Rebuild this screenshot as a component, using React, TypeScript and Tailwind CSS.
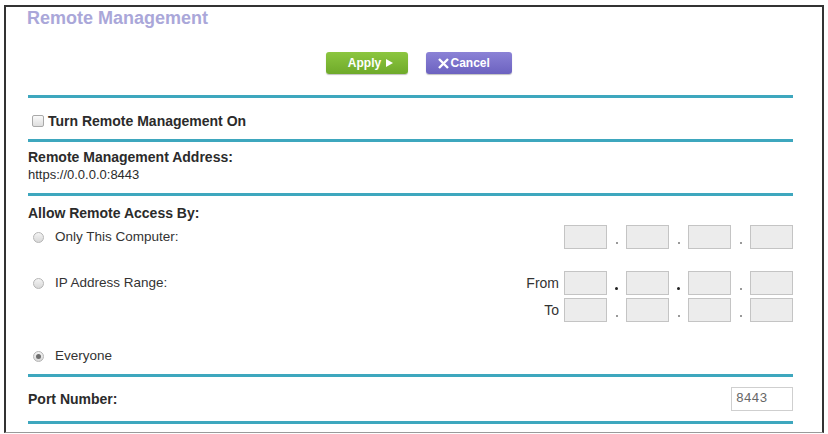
const font = { fontFamily: '"Liberation Sans", Arial, sans-serif' };

const Rule = ({ className = '' }: { className?: string }) => (
  <div className={`h-[3px] w-full bg-[#3ea7be] ${className}`} />
);

const Radio = ({ checked = false }: { checked?: boolean }) => (
  <span className="flex h-[11px] w-[11px] shrink-0 items-center justify-center rounded-full border border-[#b5b5b5] bg-gradient-to-b from-[#f4f4f4] to-[#d8d8d8]">
    {checked && <span className="h-[5px] w-[5px] rounded-full bg-[#6d6d6d]" />}
  </span>
);

const Box = () => (
  <div className="h-[24px] w-[43px] border border-[#c4c4c4] bg-[#ececec]" />
);

const Dot = ({ bold = false }: { bold?: boolean }) => (
  <span className="flex w-[19px] items-end justify-center pb-[5px]">
    <span
      className={
        bold
          ? 'h-[3px] w-[3px] rounded-full bg-[#222]'
          : 'h-[2px] w-[2px] rounded-full bg-[#777]'
      }
    />
  </span>
);

const IpRow = ({ bold = false }: { bold?: boolean }) => (
  <div className="flex">
    <Box />
    <Dot bold={bold} />
    <Box />
    <Dot bold={bold} />
    <Box />
    <Dot />
    <Box />
  </div>
);

const App = () => {
  return (
    <div className="h-[434px] w-[828px] overflow-hidden bg-white pl-[4px] pt-[5px]" style={font}>
      <div className="h-[428px] w-[820px] border-x-2 border-t-2 border-b border-x-[#333] border-t-[#333] border-b-[#9a9a9a] pl-[22px] pr-[29px]">
        <h1 className="-ml-[1px] text-[18px] font-bold leading-[22px] text-[#aaa7d9]">
          Remote Management
        </h1>

        <div className="mt-[23px] flex justify-center gap-[18px] pl-[16px]">
          <button className="flex h-[22px] w-[82px] items-center justify-center gap-[5px] rounded-[3px] bg-gradient-to-b from-[#8cc63f] to-[#6faa2a] pl-[8px] text-[12px] font-bold text-white shadow-[0_1px_1px_rgba(0,0,0,0.25)]">
            Apply
            <svg width="7" height="8" viewBox="0 0 7 8">
              <path d="M0 0 L7 4 L0 8 Z" fill="white" />
            </svg>
          </button>
          <button className="flex h-[22px] w-[86px] items-center gap-[2px] rounded-[3px] bg-gradient-to-b from-[#8b82d6] to-[#6c62c0] pl-[12px] text-[12px] font-bold text-white shadow-[0_1px_1px_rgba(0,0,0,0.25)]">
            <svg width="11" height="11" viewBox="0 0 11 11">
              <path d="M1 1 L10 10 M10 1 L1 10" stroke="white" strokeWidth="2.4" />
            </svg>
            Cancel
          </button>
        </div>

        <Rule className="mt-[21px]" />

        <div className="flex h-[41px] items-center gap-[4px] pl-[4px] pt-[5px]">
          <span className="h-[12px] w-[12px] rounded-[2px] border border-[#a9a9a9] bg-gradient-to-b from-[#fafafa] to-[#dedede]" />
          <span className="text-[14px] font-bold text-[#2b2b2b]">Turn Remote Management On</span>
        </div>

        <Rule />

        <div className="pt-[6px] pb-[9px]">
          <div className="text-[14px] font-bold leading-[18px] text-[#2b2b2b]">
            Remote Management Address:
          </div>
          <div className="text-[13px] leading-[18px] text-[#2b2b2b]">https://0.0.0.0:8443</div>
        </div>

        <Rule />

        <div className="pt-[8px] text-[14px] font-bold leading-[18px] text-[#2b2b2b]">
          Allow Remote Access By:
        </div>

        <div className="mt-[3px] flex items-start justify-between">
          <div className="flex h-[24px] items-center gap-[11px] pl-[5px] text-[13.5px] text-[#333]">
            <Radio />
            Only This Computer:
          </div>
          <IpRow />
        </div>

        <div className="mt-[22px] flex items-start justify-between">
          <div className="flex h-[24px] items-center gap-[11px] pl-[5px] text-[13.5px] text-[#333]">
            <Radio />
            IP Address Range:
          </div>
          <div className="flex flex-col gap-[3px]">
            <div className="flex items-center gap-[5px]">
              <span className="text-[14px] text-[#333]">From</span>
              <IpRow bold />
            </div>
            <div className="flex items-center justify-end gap-[5px]">
              <span className="text-[14px] text-[#333]">To</span>
              <IpRow />
            </div>
          </div>
        </div>

        <div className="mt-[24px] flex h-[20px] items-center gap-[11px] pl-[5px] text-[13.5px] text-[#333]">
          <Radio checked />
          Everyone
        </div>

        <Rule className="mt-[8px]" />

        <div className="mt-[10px] flex h-[24px] items-center justify-between">
          <span className="text-[14px] font-bold text-[#2b2b2b]">Port Number:</span>
          <div className="flex h-[24px] w-[62px] items-center border border-[#cfcfcf] bg-white pl-[4px] font-mono text-[13px] text-[#666]">
            8443
          </div>
        </div>

        <Rule className="mt-[10px]" />
      </div>
    </div>
  );
};

export default App;
